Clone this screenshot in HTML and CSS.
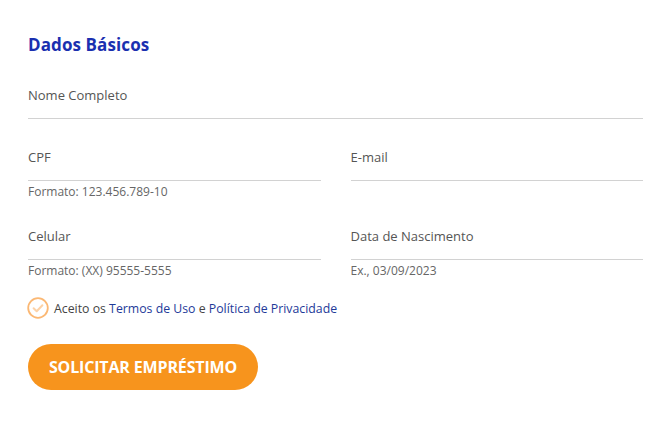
FILE: index.html
```html
<!DOCTYPE html>
<html lang="pt-BR">
<head>
<meta charset="utf-8">
<link rel="stylesheet" href="styles.css">
</head>
<body>
<form class="form">
  <h2 class="title">Dados Básicos</h2>
  <div class="field full">
    <label class="label">Nome Completo</label>
    <div class="line"></div>
  </div>
  <div class="row">
    <div class="field">
      <label class="label">CPF</label>
      <div class="line"></div>
      <div class="hint">Formato: 123.456.789-10</div>
    </div>
    <div class="field">
      <label class="label">E-mail</label>
      <div class="line"></div>
      <div class="hint"></div>
    </div>
  </div>
  <div class="row row-next">
    <div class="field">
      <label class="label">Celular</label>
      <div class="line"></div>
      <div class="hint">Formato: (XX) 95555-5555</div>
    </div>
    <div class="field">
      <label class="label">Data de Nascimento</label>
      <div class="line"></div>
      <div class="hint">Ex., 03/09/2023</div>
    </div>
  </div>
  <div class="terms">
    <span class="check">
      <svg width="22" height="22" viewBox="0 0 22 22"><circle cx="11" cy="11" r="9.8" fill="none" stroke="#fbb874" stroke-width="1.8"/><path d="M6.6 11.2 L9.7 14.2 L15.4 8.2" fill="none" stroke="#fcd2a7" stroke-width="2" stroke-linecap="round" stroke-linejoin="round"/></svg>
    </span>
    <span class="terms-text">Aceito os <a class="link">Termos de Uso</a> e <a class="link">Política de Privacidade</a></span>
  </div>
  <button type="button" class="btn">SOLICITAR EMPRÉSTIMO</button>
</form>
</body>
</html>
```
FILE: styles.css
```css
* { box-sizing: border-box; }
html, body { margin: 0; padding: 0; background: #fff; }
body { font-family: "Open Sans", "Noto Sans", sans-serif; color: #555; }
.form { padding: 33px 11px 0 28px; display: flex; flex-direction: column; }
.title { margin: 0; font-size: 17px; font-weight: 700; color: #1a30b0; line-height: 23px; letter-spacing: 0.1px; }
.field { display: flex; flex-direction: column; }
.full { margin-top: 30px; }
.label { font-size: 13px; line-height: 18px; color: #555; }
.line { height: 1px; background: #d2d2d2; margin-top: 14px; }
.row { display: grid; grid-template-columns: 1fr 1fr; column-gap: 30px; margin-top: 29px; }
.row-next { margin-top: 27px; }
.hint { font-size: 12px; line-height: 17px; color: #666; margin-top: 2px; min-height: 17px; }
.terms { display: flex; align-items: center; margin-top: 18px; font-size: 12.3px; color: #444; }
.check { display: inline-flex; margin-right: 5px; margin-left: -1px; }
.terms-text { line-height: 17px; }
.link { color: #1e3a99; text-decoration: none; }
.btn { margin-top: 25px; align-self: flex-start; width: 230px; height: 46px; border: 0; border-radius: 23px; background: #f7941d; color: #fff; font-family: "Open Sans", sans-serif; font-weight: 700; font-size: 16px; letter-spacing: -0.15px; padding: 0; }
```
